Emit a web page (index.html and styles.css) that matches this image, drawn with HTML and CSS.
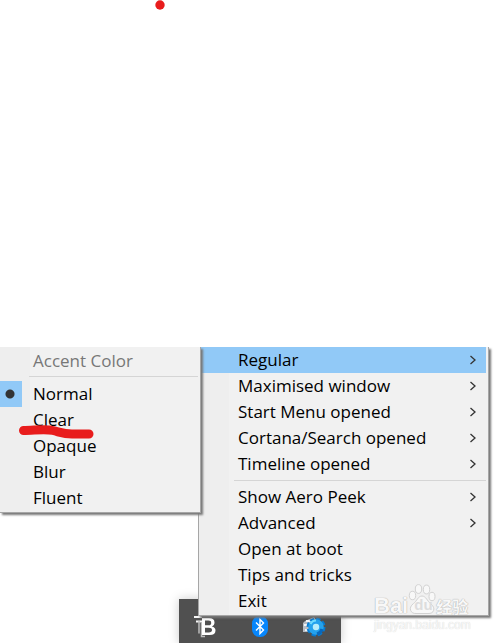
FILE: index.html
```html
<!DOCTYPE html>
<html lang="en">
<head>
<meta charset="utf-8">
<title>Taskbar menu</title>
<link rel="stylesheet" href="styles.css">
</head>
<body>
<main class="desktop">
  <svg class="pen-dot" viewBox="0 0 10 10" aria-hidden="true"><circle cx="5" cy="5" r="4.7" fill="#e81c1c"/></svg>

  <div class="menus">
    <nav class="menu main-menu" aria-label="Taskbar">
      <button class="item selected">Regular<svg class="chevron" viewBox="0 0 8 10"><path d="M1.5 1 6 5 1.5 9"/></svg></button>
      <button class="item">Maximised window<svg class="chevron" viewBox="0 0 8 10"><path d="M1.5 1 6 5 1.5 9"/></svg></button>
      <button class="item">Start Menu opened<svg class="chevron" viewBox="0 0 8 10"><path d="M1.5 1 6 5 1.5 9"/></svg></button>
      <button class="item">Cortana/Search opened<svg class="chevron" viewBox="0 0 8 10"><path d="M1.5 1 6 5 1.5 9"/></svg></button>
      <button class="item">Timeline opened<svg class="chevron" viewBox="0 0 8 10"><path d="M1.5 1 6 5 1.5 9"/></svg></button>
      <hr class="separator">
      <button class="item">Show Aero Peek<svg class="chevron" viewBox="0 0 8 10"><path d="M1.5 1 6 5 1.5 9"/></svg></button>
      <button class="item">Advanced<svg class="chevron" viewBox="0 0 8 10"><path d="M1.5 1 6 5 1.5 9"/></svg></button>
      <button class="item">Open at boot</button>
      <button class="item">Tips and tricks</button>
      <button class="item">Exit</button>
    </nav>

    <div class="menu sub-menu" role="group" aria-label="Regular">
      <button class="item" disabled>Accent Color</button>
      <hr class="separator">
      <label class="item"><input class="mark" type="radio" name="style" checked>Normal</label>
      <label class="item"><input class="mark" type="radio" name="style">Clear</label>
      <label class="item"><input class="mark" type="radio" name="style">Opaque</label>
      <label class="item"><input class="mark" type="radio" name="style">Blur</label>
      <label class="item"><input class="mark" type="radio" name="style">Fluent</label>
      <svg class="pen-line" viewBox="0 0 80 18" aria-hidden="true"><path d="M6.500 7.500C17 7.500 28 5.500 36 7.500C44 9.500 47 11 55 11H72"/></svg>
    </div>

    <div class="watermark">
      <div class="brand">
        <span>Bai</span>
        <span class="paw"><svg viewBox="0 0 28 32" aria-hidden="true"><ellipse cx="4.500" cy="11.500" rx="3.200" ry="4.200"/><ellipse cx="10.500" cy="5" rx="3.200" ry="4.400"/><ellipse cx="18.500" cy="5.500" rx="3.200" ry="4.400"/><ellipse cx="24" cy="12.500" rx="3" ry="4.200"/><path d="M14 12C10 12 9 17 5.500 19.500C-.500 24 3 30 8 29.500H20C26 30 28 24 23 20C19 17 18 12 14 12Z"/></svg><b>du</b></span>
        <span class="cjk">经验</span>
      </div>
      <div class="site">jingyan.baidu.com</div>
    </div>
  </div>

  <footer class="tray">
    <svg viewBox="0 0 24 26" role="img" aria-label="TranslucentTB"><path d="M0 3H8M2 7.500H8" fill="none" stroke="#f5f5f5" stroke-width="2"/><path d="M5 7V19.500M7.500 8V22.500H11" fill="none" stroke="#bdbdbd" stroke-width="1.500"/><path fill="#fff" fill-rule="evenodd" d="M8 4H15Q20.500 4 20.500 8.500Q20.500 11.500 17.800 12.400Q21.500 13.200 21.500 16.500Q21.500 21 15.500 21H8ZM11 6.500V11.300H14.500Q17.200 11.300 17.200 8.900Q17.200 6.500 14.500 6.500ZM11 13.800V18.500H14.800Q18 18.500 18 16.100Q18 13.800 14.800 13.800Z"/></svg>
    <svg viewBox="0 0 24 26" role="img" aria-label="Bluetooth"><rect x="4" y="2" width="16" height="21" rx="7.500" fill="#0786fb"/><path d="M8 8.500 15.500 16 12 19.500V5.500L15.500 9 8 16.500" fill="none" stroke="#fff" stroke-width="1.400"/></svg>
    <svg viewBox="0 0 24 26" role="img" aria-label="Device settings"><path d="M3 7 12 3 15 8V18H1V9Z" fill="#b7bdc4"/><path d="M4 7H12M2 11H10M3 16H10" stroke="#f2f4f5" stroke-width="2"/><circle cx="14" cy="13" r="7.500" fill="none" stroke="#087bd0" stroke-width="4" stroke-dasharray="4 1.890"/><circle cx="14" cy="13" r="5.500" fill="#b8edfb" stroke="#25a2ed" stroke-width="4.500"/><path d="M8.500 10A6 6 0 0 1 14 6.500" fill="none" stroke="#70dcff" stroke-width="2"/><path d="M20 15A7 7 0 0 1 15 20" fill="none" stroke="#0868bd" stroke-width="3"/></svg>
  </footer>
</main>
</body>
</html>
```
FILE: styles.css
```css
* { box-sizing: border-box; }
body {
  margin: 0;
  background: #fff;
  font: 17px/26px "Open Sans", "Noto Sans", sans-serif;
  color: #000;
}
.desktop {
  display: flex;
  flex-direction: column;
  min-height: 100vh;
  padding-top: 347px;
  position: relative;
  overflow: hidden;
}
.pen-dot { position: absolute; left: 155px; top: 0; width: 10px; height: 10px; }
.menus { position: relative; z-index: 1; padding: 0 11px 0 198px; }
.menu {
  background: linear-gradient(90deg, #eeeeee 30px, #f1f1f1 30px);
  border: 1px solid #a6a6a6;
  border-top: 0;
  box-shadow: 2px 2px 2px #777;
}
.main-menu { padding: 0 2px 1px; clip-path: inset(0 -6px -6px 0); }
.sub-menu {
  position: absolute;
  left: 0;
  top: 0;
  width: 201px;
  padding: 1px 2px 1px 0;
  border-left: 0;
  clip-path: inset(0 -6px -6px 0);
}
.item {
  display: flex;
  align-items: center;
  width: 100%;
  height: 26px;
  margin: 0;
  padding: 0 9px 0 37px;
  border: 0;
  background: none;
  color: inherit;
  font: inherit;
  text-align: left;
  white-space: nowrap;
}
.selected { background: #91c9f7; }
.sub-menu .item { padding-left: 33px; }
.sub-menu label.item { padding-left: 0; }
.item:disabled { color: #777; }
.chevron {
  width: 8px;
  height: 10px;
  margin-left: auto;
  fill: none;
  stroke: #333;
  stroke-width: 1.3;
}
.separator {
  height: 1px;
  margin: 3px 0 3px 33px;
  border: 0;
  background: #d5d5d5;
}
.sub-menu .separator { margin: 2px 0 4px 29px; }
.mark {
  appearance: none;
  width: 22px;
  height: 26px;
  margin: 0 11px 0 0;
}
.mark:checked { background: radial-gradient(circle at 10px 13px, #333 4px, #91c9f7 5px); }
.pen-line {
  position: absolute;
  left: 17px;
  top: 76px;
  width: 80px;
  height: 18px;
  fill: none;
  stroke: #e81c1c;
  stroke-width: 9;
  stroke-linecap: round;
}
.watermark {
  position: absolute;
  left: 374px;
  top: 237px;
  font-family: "Liberation Sans", "Noto Sans CJK SC", sans-serif;
  color: #f8f8f8;
  text-shadow: 0 0 1px #aaa, 0 0 1px #bbb;
  pointer-events: none;
}
.brand { display: flex; align-items: flex-end; height: 32px; font-size: 22px; line-height: 20px; font-weight: bold; }
.paw { position: relative; width: 28px; height: 32px; }
.paw svg { width: 28px; height: 32px; fill: #f8f8f8; stroke: #d2d2d2; stroke-width: 1; }
.paw b { position: absolute; left: 6px; top: 11px; font-size: 15px; line-height: 20px; color: #ddd; text-shadow: none; }
.cjk { font-family: "Noto Sans CJK SC", sans-serif; font-size: 16px; }
.site { margin-top: 3px; font-size: 12px; line-height: 13px; text-shadow: 0 0 1px #ccc; }
.tray {
  display: flex;
  flex: 1;
  align-items: flex-end;
  justify-content: space-between;
  width: 162px;
  min-height: 45px;
  margin: -17px 0 0 179px;
  padding: 0 15px 4px;
  background: #505050;
  box-shadow: 0 0 10px #ccc;
}
.tray svg { width: 24px; height: 26px; }
```
